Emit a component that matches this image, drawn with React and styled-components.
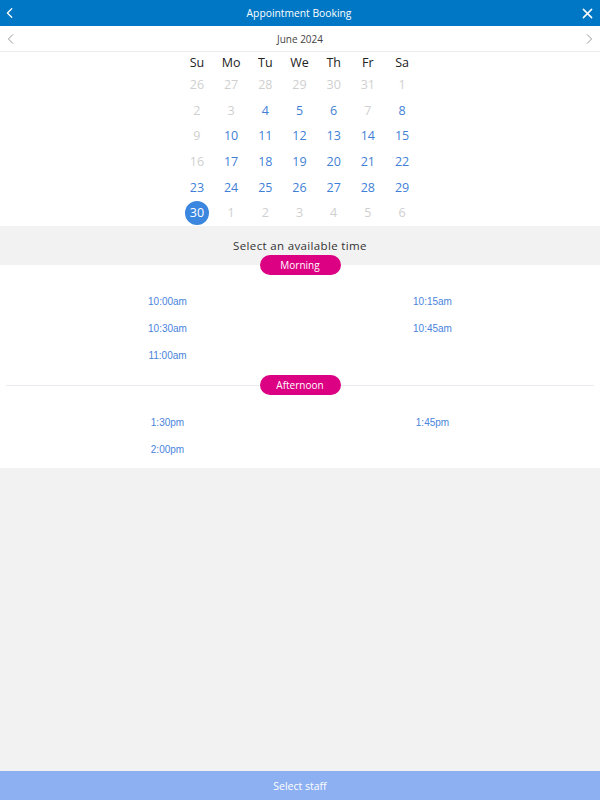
import styled, { createGlobalStyle } from "styled-components";

const GlobalStyle = createGlobalStyle`
  html, body {
    margin: 0;
    padding: 0;
    background: #f2f2f2;
    font-family: "Open Sans", "Noto Sans", sans-serif;
  }
`;

const Page = styled.div`
  display: flex;
  flex-direction: column;
  height: 800px;
  background: #f2f2f2;
`;

const Header = styled.header`
  display: flex;
  align-items: center;
  justify-content: space-between;
  height: 26px;
  padding: 0 5px 0 3px;
  background-color: #0077c4;
  color: #fff;
`;

const Title = styled.div`
  font-size: 10.3px;
`;

const IconButton = styled.span`
  display: flex;
  align-items: center;
  justify-content: center;
  width: 14px;
  height: 14px;
`;

const MonthBar = styled.div`
  display: flex;
  align-items: center;
  justify-content: space-between;
  height: 25px;
  padding: 0 4px;
  background: #fff;
  border-bottom: 1px solid #ececec;
`;

const MonthLabel = styled.div`
  font-size: 10px;
  color: #444;
`;

const Calendar = styled.div`
  background: #fff;
  display: flex;
  justify-content: center;
`;

const Grid = styled.div`
  display: grid;
  grid-template-columns: repeat(7, 34.2px);
  grid-template-rows: 20px repeat(6, 25.6px);
  margin-left: -1px;
`;

const WeekDay = styled.div`
  display: flex;
  align-items: center;
  justify-content: center;
  font-size: 12.5px;
  color: #222;
`;

const Day = styled.div`
  display: flex;
  align-items: center;
  justify-content: center;
  font-size: 12.5px;
  color: ${(p) => (p.$off ? "#cfcfcf" : "#3f7fd6")};
`;

const Selected = styled.span`
  display: flex;
  align-items: center;
  justify-content: center;
  width: 24px;
  height: 24px;
  border-radius: 50%;
  background: #3b86de;
  color: #fff;
`;

const Prompt = styled.div`
  height: 39px;
  display: flex;
  align-items: center;
  justify-content: center;
  font-size: 11.5px;
  letter-spacing: 0.35px;
  color: #333;
`;

const Slots = styled.div`
  background: #fff;
  padding-bottom: 5px;
`;

const Section = styled.div`
  position: relative;
  display: flex;
  justify-content: center;
  height: ${(p) => (p.$line ? "20px" : "0")};
  margin: ${(p) => (p.$line ? "6px 6px 0" : "0")};

  &::before {
    content: "";
    display: ${(p) => (p.$line ? "block" : "none")};
    position: absolute;
    left: 0;
    right: 0;
    top: 10px;
    border-top: 1px solid #e8ebef;
  }
`;

const Pill = styled.div`
  position: relative;
  top: ${(p) => (p.$up ? "-10px" : "0")};
  width: 81px;
  height: 20px;
  border-radius: 10px;
  background: #dc0083;
  color: #fff;
  font-size: 10px;
  display: flex;
  align-items: center;
  justify-content: center;
`;

const TimeList = styled.div`
  display: grid;
  grid-template-columns: 1fr 1fr;
  grid-auto-rows: 27px;
  padding: ${(p) => p.$pad} 35px 0;
`;

const Time = styled.div`
  display: flex;
  align-items: center;
  justify-content: center;
  font-family: "Liberation Sans", Arial, sans-serif;
  font-size: 10px;
  color: #4a84dc;
`;

const Spacer = styled.div`
  flex: 1;
`;

const Footer = styled.div`
  height: 29px;
  background: #8db0f2;
  color: #fff;
  font-size: 10.5px;
  display: flex;
  align-items: center;
  justify-content: center;
`;

const Chevron = ({ dir, color, size = 14, stroke = 1.6 }) => (
  <svg width={size} height={size} viewBox="0 0 14 14" fill="none">
    <path
      d={dir === "left" ? "M9 2 L4 7 L9 12" : "M5 2 L10 7 L5 12"}
      stroke={color}
      strokeWidth={stroke}
      strokeLinecap="round"
      strokeLinejoin="round"
    />
  </svg>
);

const Close = () => (
  <svg width="11" height="11" viewBox="0 0 12 12">
    <path d="M1.5 1.5 L10.5 10.5 M10.5 1.5 L1.5 10.5" stroke="#fff" strokeWidth="1.6" strokeLinecap="round" />
  </svg>
);

const weekdays = ["Su", "Mo", "Tu", "We", "Th", "Fr", "Sa"];
const available = [4, 5, 6, 8, 10, 11, 12, 13, 14, 15, 17, 18, 19, 20, 21, 22, 23, 24, 25, 26, 27, 28, 29];

const days = [
  ...[26, 27, 28, 29, 30, 31].map((n) => ({ n, off: true })),
  ...Array.from({ length: 30 }, (_, i) => ({
    n: i + 1,
    off: !available.includes(i + 1) && i + 1 !== 30,
    sel: i + 1 === 30,
  })),
  ...[1, 2, 3, 4, 5, 6].map((n) => ({ n, off: true })),
];

const App = () => {
  return (
    <Page>
      <GlobalStyle />
      <Header>
        <IconButton>
          <Chevron dir="left" color="#fff" size={12} stroke={1.5} />
        </IconButton>
        <Title>Appointment Booking</Title>
        <IconButton>
          <Close />
        </IconButton>
      </Header>
      <MonthBar>
        <IconButton>
          <Chevron dir="left" color="#888" size={12} stroke={1} />
        </IconButton>
        <MonthLabel>June 2024</MonthLabel>
        <IconButton>
          <Chevron dir="right" color="#888" size={12} stroke={1} />
        </IconButton>
      </MonthBar>
      <Calendar>
        <Grid>
          {weekdays.map((d) => (
            <WeekDay key={d}>{d}</WeekDay>
          ))}
          {days.map((d, i) => (
            <Day key={i} $off={d.off}>
              {d.sel ? <Selected>{d.n}</Selected> : d.n}
            </Day>
          ))}
        </Grid>
      </Calendar>
      <Prompt>Select an available time</Prompt>
      <Slots>
        <Section>
          <Pill $up>Morning</Pill>
        </Section>
        <TimeList $pad="23px">
          <Time>10:00am</Time>
          <Time>10:15am</Time>
          <Time>10:30am</Time>
          <Time>10:45am</Time>
          <Time>11:00am</Time>
        </TimeList>
        <Section $line>
          <Pill>Afternoon</Pill>
        </Section>
        <TimeList $pad="14px">
          <Time>1:30pm</Time>
          <Time>1:45pm</Time>
          <Time>2:00pm</Time>
        </TimeList>
      </Slots>
      <Spacer />
      <Footer>Select staff</Footer>
    </Page>
  );
};

export default App;
